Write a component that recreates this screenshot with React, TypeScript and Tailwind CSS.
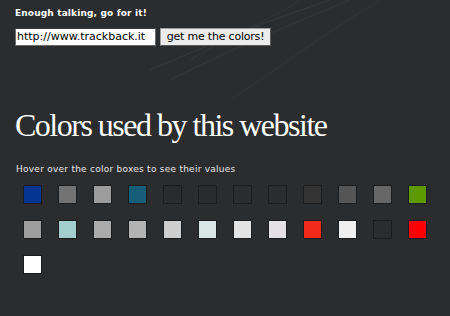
import React from 'react'

const rows: string[][] = [
  ['#023591', '#737373', '#9c9c9c', '#175e7a', '#2a2b2d', '#2a2b2d', '#2b2c2e', '#2b2c2e', '#333333', '#555555', '#676767', '#5c9a00'],
  ['#9e9e9e', '#a3cfcf', '#ababab', '#b3b3b3', '#cecece', '#d8e6e5', '#e3e3e3', '#e3e1e3', '#f02a1a', '#efefef', '#2b2c2e', '#ff0000'],
  ['#ffffff'],
]

export default function App() {
  return (
    <div className="relative w-[450px] h-[316px] overflow-hidden bg-[#2b2c2e] text-white">
      {/* faint swirl lines in the backdrop */}
      <svg className="absolute left-0 top-0" width="450" height="140" viewBox="0 0 450 140" fill="none">
        <path d="M150 70 C 220 40, 270 20, 330 0" stroke="rgba(255,255,255,0.05)" />
        <path d="M170 80 C 240 45, 290 25, 350 0" stroke="rgba(255,255,255,0.04)" />
        <path d="M190 60 C 240 30, 280 15, 300 0" stroke="rgba(255,255,255,0.04)" />
        <path d="M230 100 C 290 60, 330 30, 380 0" stroke="rgba(255,255,255,0.03)" />
      </svg>

      <div className="relative px-[15px] pt-[7px]">
        <p className="font-['DejaVu_Sans',sans-serif] text-[9px] font-bold leading-[12px] tracking-[0.15px]">
          Enough talking, go for it!
        </p>

        <div className="mt-[9px] flex items-start gap-[4px]">
          <div className="w-[141px] h-[18px] bg-white border border-[#6b6b6b] border-t-[#3a3a3a] pl-[1px] flex items-center font-['DejaVu_Sans',sans-serif] text-[11px] text-black">
            http://www.trackback.it
          </div>
          <button className="w-[111px] h-[18px] bg-[#ececec] border border-[#a0a0a0] border-b-[#5a5a5a] border-r-[#5a5a5a] flex items-center justify-center font-['DejaVu_Sans',sans-serif] text-[11px] text-black tracking-[-0.2px]">
            get me the colors!
          </button>
        </div>

        <h1 className="mt-[61px] font-['Liberation_Serif',serif] text-[32px] leading-[36px] tracking-[-1.5px]">
          Colors used by this website
        </h1>

        <p className="mt-[20px] pl-[1px] font-['DejaVu_Sans',sans-serif] text-[9px] leading-[12px] tracking-[0.25px] text-[#e6e6e6]">
          Hover over the color boxes to see their values
        </p>

        <div className="mt-[10px] pl-[8px] flex flex-col gap-[16px]">
          {rows.map((row, i) => (
            <div key={i} className="flex gap-[16px]">
              {row.map((c, j) => (
                <div key={j} className="w-[19px] h-[19px] border border-[#1b1c1e]" style={{ backgroundColor: c }} />
              ))}
            </div>
          ))}
        </div>
      </div>
    </div>
  )
}
